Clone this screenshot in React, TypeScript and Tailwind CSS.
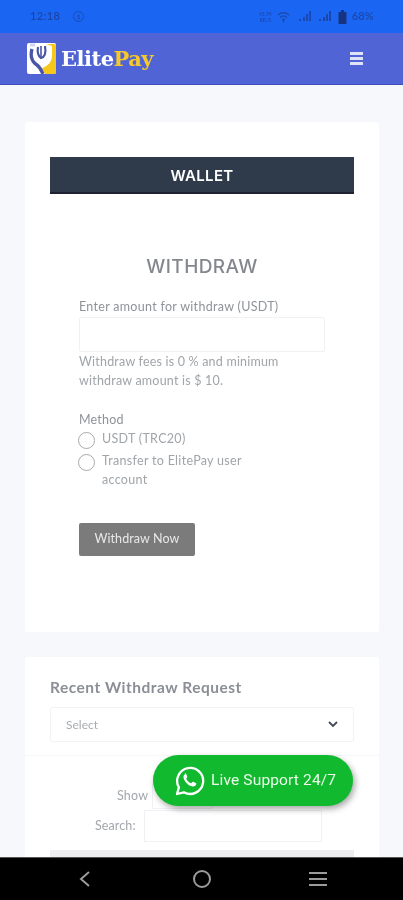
import React from "react";

const body = { fontFamily: '"Lato", "Open Sans", sans-serif' };

function StatusIcons() {
  return (
    <div className="flex items-center gap-[5px] text-[#1c3f9c]">
      <div className="flex flex-col items-center text-[5px] leading-[6px] font-bold opacity-70">
        <span>45.74</span>
        <span>KB/S</span>
      </div>
      <svg width="13" height="12" viewBox="0 0 13 12" fill="none" stroke="currentColor" strokeWidth="1.4" opacity="0.7">
        <path d="M1 4c3-3 8-3 11 0M3 6.5c2-2 5-2 7 0M5 9c1-1 2-1 3 0" />
        <path d="M6.5 9v2.5" />
      </svg>
      <svg width="13" height="11" viewBox="0 0 13 11" fill="currentColor" opacity="0.7" className="ml-[3px]">
        <rect x="1" y="8" width="2" height="2" />
        <rect x="5" y="6" width="2" height="4" />
        <rect x="8" y="3" width="2" height="7" />
        <rect x="11" y="0" width="2" height="10" />
      </svg>
      <svg width="13" height="11" viewBox="0 0 13 11" fill="currentColor" opacity="0.8" className="ml-[2px]">
        <rect x="1" y="8" width="2" height="2" />
        <rect x="5" y="6" width="2" height="4" />
        <rect x="8" y="3" width="2" height="7" />
        <rect x="11" y="0" width="2" height="10" />
      </svg>
      <svg width="9" height="14" viewBox="0 0 9 14" fill="#17337f" className="ml-[2px]">
        <rect x="3" y="0" width="3" height="2" />
        <rect x="0.5" y="2" width="8" height="12" rx="1" />
      </svg>
      <span className="text-[11px] font-semibold opacity-80 tracking-[0.2px]">68%</span>
    </div>
  );
}

function Logo() {
  return (
    <svg width="29" height="31" viewBox="0 0 29 31">
      <rect x="0" y="0" width="29" height="31" rx="2" fill="#ffffff" />
      <path d="M19 1h8a2 2 0 0 1 2 2v26a2 2 0 0 1-2 2H18l-3-6c6-2 10-6 10-13V3z" fill="#f7c71c" />
      <path d="M5 6c-2 7 0 13 5 16 3 2 4 5 6 9" fill="none" stroke="#4a55a8" strokeWidth="3.4" />
      <path d="M11 4c-1 6 0 9 3 11 4-1 5-6 4-12" fill="none" stroke="#4a55a8" strokeWidth="2.2" />
      <path d="M14 3v11" stroke="#4a55a8" strokeWidth="1.6" />
      <path d="M3 2h5" stroke="#cfd6f5" strokeWidth="3" />
    </svg>
  );
}

function WhatsApp() {
  return (
    <svg width="30" height="30" viewBox="0 0 30 30" fill="none">
      <path
        d="M2 28l1.9-6.6A13 13 0 1 1 8.9 26.3z"
        stroke="#ffffff"
        strokeWidth="2.3"
        strokeLinejoin="round"
      />
      <path
        d="M10.6 8.2c-.6 0-1.4.5-1.8 1.4-.7 1.5-.3 3.6 1.6 6.1 2.2 2.9 4.9 4.6 7.3 4.8 1.6.1 3-.7 3.4-2 .2-.6.2-1.1.1-1.3-.2-.3-2.6-1.4-3.1-1.5-.4-.1-.6.1-1 .6-.4.5-.7 1-1.1.9-.8-.2-2-.9-3-1.9-.9-.9-1.5-1.9-1.7-2.5-.1-.4.3-.7.7-1.2.3-.4.4-.6.2-1.1-.2-.5-1-2.4-1.3-2.9-.1-.3-.8-.4-1.3-.4z"
        fill="#ffffff"
      />
    </svg>
  );
}

function Radio({ label }: { label: React.ReactNode }) {
  return (
    <div className="flex items-start gap-[6px] w-[185px] ml-[-1px]">
      <span className="mt-[2px] w-[17px] h-[17px] rounded-full border border-[#a9a9a9] bg-white shrink-0" />
      <span className="ml-[1px] text-[12.5px] leading-[18.5px] tracking-[0.3px] text-[#a0a5aa]">{label}</span>
    </div>
  );
}

export default function App() {
  return (
    <div className="relative w-[403px] h-[900px] overflow-hidden flex flex-col bg-[#f7f8fc] blur-[0.5px]" style={body}>
      {/* status bar */}
      <div className="h-[33px] shrink-0 bg-[#1a66f2] flex items-center justify-between pl-[30px] pr-[29px]">
        <div className="flex items-center gap-[13px] text-[#1c3f9c]">
          <span className="text-[11px] font-semibold tracking-[0.4px] opacity-85">12:18</span>
          <span className="w-[11px] h-[11px] rounded-full border border-[#1c3f9c] opacity-70 flex items-center justify-center text-[6px] font-bold">
            $
          </span>
        </div>
        <StatusIcons />
      </div>

      {/* nav */}
      <div className="h-[52px] shrink-0 bg-[#5064d6] border-b border-[#3d4fc0] flex items-center justify-between pl-[27px] pr-[40px]">
        <div className="flex items-center gap-[5px]">
          <Logo />
          <span
            className="leading-none font-bold tracking-[-0.5px]"
            style={{ fontFamily: '"DejaVu Serif", serif', fontSize: 21 }}
          >
            <span className="text-white">Elite</span>
            <span className="text-[#f5c92a]">Pay</span>
          </span>
        </div>
        <div className="w-[13px] flex flex-col gap-[2px]">
          <span className="h-[3px] bg-[#dfe3f7]" />
          <span className="h-[3px] bg-[#dfe3f7]" />
          <span className="h-[3px] bg-[#dfe3f7]" />
        </div>
      </div>

      {/* page */}
      <div className="flex-1 min-h-0 overflow-hidden pl-[25px] pr-[24px] pt-[37px] flex flex-col gap-[25px]">
        <section className="bg-white rounded-[3px] h-[510px] shrink-0 px-[25px] pt-[35px]">
          <div
            className="h-[37px] bg-[#2f3a4a] border-b-2 border-[#1d2333] flex items-center justify-center text-white text-[15px] font-semibold tracking-[0.3px] pt-[3px]"
            style={{ fontFamily: '"Inter", sans-serif' }}
          >
            WALLET
          </div>
          <h2
            className="mt-[61px] text-center text-[19px] leading-[24px] font-medium text-[#84888e] tracking-[0.4px]"
            style={{ fontFamily: '"Inter", sans-serif' }}
          >
            WITHDRAW
          </h2>
          <div className="px-[29px]">
            <label className="block mt-[19px] text-[12.5px] leading-[18px] tracking-[0.3px] text-[#8f9399]">
              Enter amount for withdraw (USDT)
            </label>
            <div className="mt-[1px] w-[246px] h-[35px] border border-[#f0f1f4] rounded-[2px]" />
            <p className="w-[232px] text-[12.5px] leading-[19px] tracking-[0.2px] text-[#a0a5aa]">
              Withdraw fees is 0 % and minimum withdraw amount is $ 10.
            </p>
            <div className="mt-[21px] text-[12.5px] leading-[18px] tracking-[0.2px] text-[#8f9399]">Method</div>
            <div className="mt-[1px]">
              <Radio label="USDT (TRC20)" />
            </div>
            <div className="mt-[3px]">
              <Radio label="Transfer to ElitePay user account" />
            </div>
            <button className="mt-[34px] w-[116px] h-[33px] rounded-[2px] bg-[#7b7b7b] text-[12.5px] tracking-[0.1px] text-[#e8e8e8]">
              Withdraw Now
            </button>
          </div>
        </section>

        <section className="bg-white rounded-[3px] shrink-0 h-[300px] pt-[20px]">
          <div className="px-[25px]">
            <h3 className="text-[15.5px] leading-[20px] font-bold text-[#8b8f95] tracking-[0.5px]">
              Recent Withdraw Request
            </h3>
            <div className="mt-[10px] h-[35px] border border-[#f2f3f6] rounded-[2px] flex items-center justify-between pl-[15px] pr-[15px]">
              <span className="text-[12px] text-[#a8acb1]">Select</span>
              <svg width="10" height="7" viewBox="0 0 10 7" fill="none" stroke="#444a55" strokeWidth="1.8">
                <path d="M1 1l4 4 4-4" />
              </svg>
            </div>
          </div>
          <div className="mt-[13px] border-t border-[#f5f6f8]" />
          <div className="px-[25px]">
            <div className="mt-[27px] flex items-center h-[26px]">
              <span className="ml-[67px] w-[35px] text-[12.5px] tracking-[0.2px] text-[#a3a7ac]">Show</span>
              <div className="w-[60px] h-[26px] border border-[#f0f1f4]" />
            </div>
            <div className="mt-[1px] flex items-center">
              <span className="ml-[45px] w-[48px] text-[12.5px] tracking-[0.1px] text-[#a3a7ac]">Search:</span>
              <div className="ml-[1px] w-[178px] h-[32px] border border-[#f0f1f4]" />
            </div>
            <div className="mt-[8px] h-[20px] bg-[#eeeef0]" />
          </div>
        </section>
      </div>

      {/* bottom navigation */}
      <div className="h-[43px] shrink-0 bg-black border-t border-[#555] flex items-center justify-between pl-[78px] pr-[76px]">
        <svg width="14" height="18" viewBox="0 0 14 18" fill="none" stroke="#9b9b9b" strokeWidth="2">
          <path d="M11 2L3 9l8 7" />
        </svg>
        <svg width="20" height="20" viewBox="0 0 20 20" fill="none" stroke="#9b9b9b" strokeWidth="2" className="ml-[3px]">
          <circle cx="10" cy="10" r="8" />
        </svg>
        <div className="w-[18px] flex flex-col gap-[4px]">
          <span className="h-[2px] bg-[#9b9b9b]" />
          <span className="h-[2px] bg-[#9b9b9b]" />
          <span className="h-[2px] bg-[#9b9b9b]" />
        </div>
      </div>

      {/* floating whatsapp */}
      <div className="absolute left-[153px] top-[755px] w-[200px] h-[51px] rounded-full bg-[#11b92f] shadow-[2px_3px_6px_rgba(0,0,0,0.35)] flex items-center pl-[22px] gap-[6px]">
        <WhatsApp />
        <span className="text-[15.5px] tracking-[0.15px] text-[#eafbe9]" style={{ fontFamily: '"Roboto", sans-serif' }}>
          Live Support 24/7
        </span>
      </div>
    </div>
  );
}
